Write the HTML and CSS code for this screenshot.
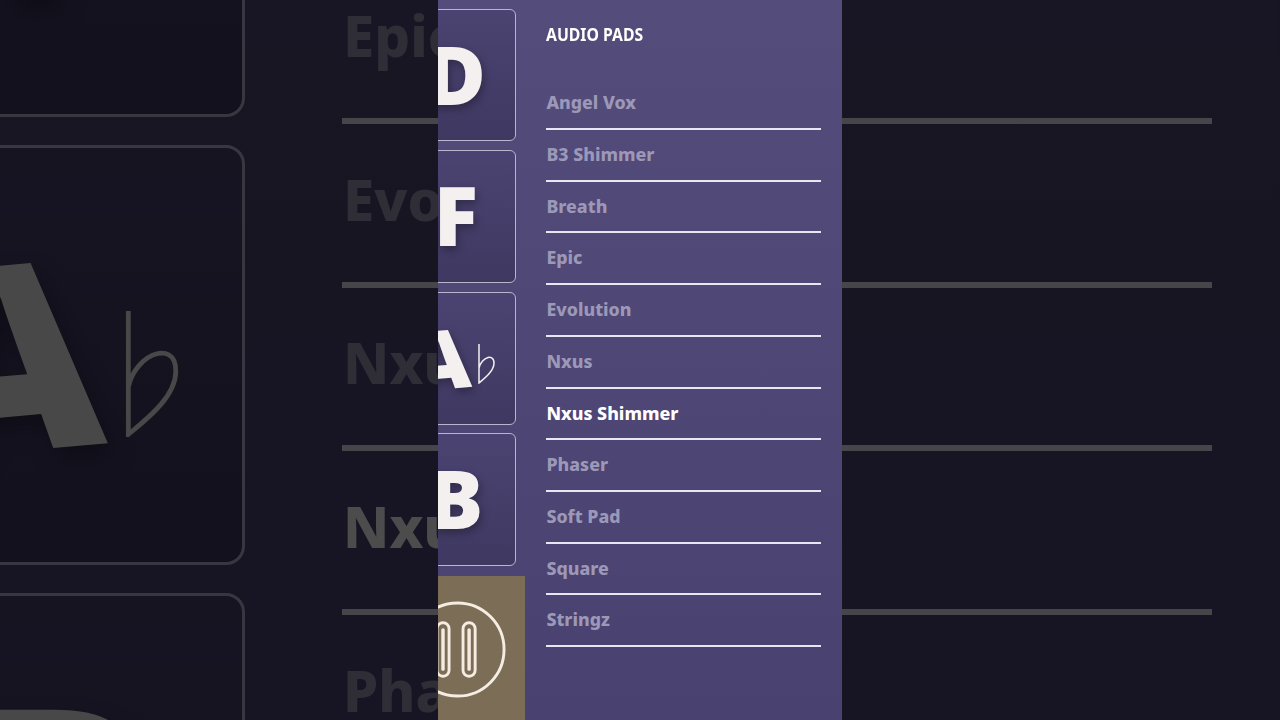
FILE: index.html
```html
<!DOCTYPE html>
<html lang="en">

<head>
    <meta charset="UTF-8">
    <meta name="viewport" content="width=device-width, initial-scale=1.0">
    <title>Audio Pads</title>
    <link rel="stylesheet" href="styles.css">
</head>

<body>
    <!-- enlarged, dimmed copy of the panel behind the real one -->
    <div class="panel backdrop" aria-hidden="true">
        <div class="pads">
            <div class="pad"><span class="note">D</span></div>
            <div class="pad"><span class="note">F</span></div>
            <div class="pad">
                <span class="note note-tilt">A</span>
                <svg class="flat" viewBox="0 0 20 40"><path d="M2 0V39C8 34 17 27 17 19C17 13 13 13 11 13.500C7 14.500 3 19 2 24"/></svg>
            </div>
            <div class="pad"><span class="note">B</span></div>
        </div>
        <div class="sounds">
            <h2>AUDIO PADS</h2>
            <ul>
                <li>Angel Vox</li>
                <li>B3 Shimmer</li>
                <li>Breath</li>
                <li>Epic</li>
                <li>Evolution</li>
                <li>Nxus</li>
                <li class="active">Nxus Shimmer</li>
                <li>Phaser</li>
                <li>Soft Pad</li>
                <li>Square</li>
                <li>Stringz</li>
            </ul>
        </div>
    </div>

    <div class="panel">
        <div class="pads">
            <div class="pad"><span class="note">D</span></div>
            <div class="pad"><span class="note">F</span></div>
            <div class="pad">
                <span class="note note-tilt">A</span>
                <svg class="flat" viewBox="0 0 20 40"><path d="M2 0V39C8 34 17 27 17 19C17 13 13 13 11 13.500C7 14.500 3 19 2 24"/></svg>
            </div>
            <div class="pad"><span class="note">B</span></div>
            <div class="stop">
                <svg class="pause" viewBox="0 0 100 100">
                    <circle cx="50" cy="50" r="48"/>
                    <rect x="28.800" y="22.500" width="12.500" height="55" rx="6"/>
                    <rect class="pause-core" x="33.300" y="28" width="3.500" height="44" rx="1.700"/>
                    <rect x="55.700" y="22.500" width="12.500" height="55" rx="6"/>
                    <rect class="pause-core" x="60.200" y="28" width="3.500" height="44" rx="1.700"/>
                </svg>
            </div>
        </div>
        <div class="sounds">
            <h2>AUDIO PADS</h2>
            <ul>
                <li>Angel Vox</li>
                <li>B3 Shimmer</li>
                <li>Breath</li>
                <li>Epic</li>
                <li>Evolution</li>
                <li>Nxus</li>
                <li class="active">Nxus Shimmer</li>
                <li>Phaser</li>
                <li>Soft Pad</li>
                <li>Square</li>
                <li>Stringz</li>
            </ul>
        </div>
    </div>
</body>

</html>
```

FILE: styles.css
```css
body {
    font-family: "Noto Sans", "Open Sans", sans-serif;
    background-color: #17161f;
    display: flex;
    justify-content: center;
    height: 100vh;
    margin: 0;
    overflow: hidden;
}

.panel {
    position: relative;
    display: flex;
    flex: none;
    width: 404px;
    height: 720px;
    overflow: hidden;
    background: linear-gradient(180deg, #544c7b 0%, #49416f 100%);
}

.backdrop {
    position: absolute;
    left: 0;
    top: -246.050px;
    zoom: 3.165;
    filter: brightness(0.3);
}

.pads {
    flex: none;
    display: flex;
    flex-direction: column;
    gap: 8.850px;
    width: 140px;
    margin-left: -53px;
    padding-top: 8.800px;
}

.pad {
    display: flex;
    justify-content: center;
    align-items: center;
    box-sizing: border-box;
    width: 130.500px;
    height: 132.700px;
    padding-left: 11px;
    border: 1px solid #b9b5cd;
    border-radius: 6px;
    background: linear-gradient(180deg, #4b4472 0%, #3f3861 100%);
}

.note {
    margin-bottom: 5px;
    font-size: 82px;
    font-weight: 900;
    line-height: 1;
    color: #f4f0f0;
    text-shadow: 2px 4px 8px rgba(0, 0, 0, 0.3);
}

.note-tilt {
    transform: translateY(1.500px) rotate(-5deg);
}

.flat {
    width: 20px;
    height: 40px;
    margin: 12px 5px 0 7px;
}

.flat path {
    fill: none;
    stroke: #f4f0f0;
    stroke-width: 1.500;
}

.stop {
    flex: 1;
    display: flex;
    justify-content: center;
    align-items: center;
    margin-top: 1px;
    background: #7c6d56;
}

.pause {
    width: 97px;
    height: 97px;
    margin: 3px 0 0 4px;
}

.pause circle,
.pause rect {
    fill: none;
    stroke: #f5ece2;
    stroke-width: 3;
}

.pause .pause-core {
    fill: #f5ece2;
    stroke: none;
}

.sounds {
    flex: 1;
    padding: 21px 21px 0 21px;
}

h2 {
    margin: 0 0 30px;
    font-size: 18px;
    line-height: 27.300px;
    font-weight: 700;
    color: #ffffff;
    transform: scaleX(0.875);
    transform-origin: 0 0;
}

ul {
    list-style: none;
    margin: 0;
    padding: 0;
}

li {
    box-sizing: border-box;
    height: 51.720px;
    padding: 12px 0 0 0.400px;
    border-bottom: 2px solid #e8e6f2;
    font-size: 17.800px;
    line-height: 24px;
    font-weight: 800;
    color: #9c98b8;
}

li.active {
    color: #ffffff;
}
```
